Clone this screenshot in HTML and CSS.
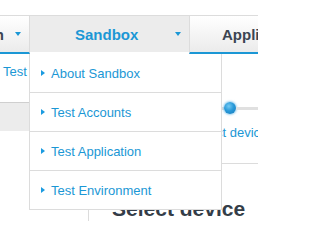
FILE: index.html
```html
<!DOCTYPE html>
<html>
<head>
<meta charset="utf-8">
<link rel="stylesheet" href="styles.css">
</head>
<body>
<div class="page">
  <div class="topbar"></div>
  <nav class="nav">
    <div class="tab tab-left"><span class="tab-label">Documentation</span><span class="caret"></span></div>
    <div class="tab tab-active"><span class="tab-label">Sandbox</span><span class="caret"></span>
      <ul class="menu">
        <li class="menu-item"><span class="bullet"></span>About Sandbox</li>
        <li class="menu-item"><span class="bullet"></span>Test Accounts</li>
        <li class="menu-item"><span class="bullet"></span>Test Application</li>
        <li class="menu-item"><span class="bullet"></span>Test Environment</li>
      </ul>
    </div>
    <div class="tab tab-right"><span class="tab-label">Applications</span><span class="caret"></span></div>
  </nav>
  <div class="main">
    <aside class="side">
      <a class="side-link">Test Accounts</a>
      <div class="side-band"></div>
    </aside>
    <section class="content">
      <div class="stepper">
        <div class="steps">
          <div class="step"><div class="rail"><span class="dot"></span></div><div class="step-label">Select app</div></div>
          <div class="step"><div class="rail"><span class="dot"></span></div><div class="step-label">Select device</div></div>
          <div class="step"><div class="rail"><span class="dot"></span></div><div class="step-label">Run test</div></div>
        </div>
      </div>
      <h2 class="heading">Select device</h2>
    </section>
  </div>
</div>
</body>
</html>
```
FILE: styles.css
```css
html, body {
  margin: 0;
  padding: 0;
  background: #fff;
}
.page {
  width: 258px;
  height: 221px;
  overflow: hidden;
  font-family: "Liberation Sans", Arial, sans-serif;
}
.topbar {
  height: 15px;
}
.nav {
  display: flex;
  border-top: 1px solid #dcdcdc;
  position: relative;
  z-index: 2;
}
.tab {
  display: flex;
  align-items: center;
  box-sizing: border-box;
  height: 38px;
  border-bottom: 2px solid #1b97d5;
  font-weight: bold;
  font-size: 15px;
  white-space: nowrap;
  color: #3b4552;
  flex: none;
}
.caret {
  width: 0;
  height: 0;
  border-top: 4px solid #1b97d5;
  border-left: 3px solid transparent;
  border-right: 3px solid transparent;
  flex: none;
}
.tab-left {
  width: 30px;
  padding-right: 8px;
  border-right: 1px solid #dcdcdc;
  justify-content: flex-end;
  overflow: hidden;
  background: linear-gradient(#ffffff, #ebebeb);
}
.tab-left .caret {
  margin-left: 11px;
}
.tab-active {
  position: relative;
  width: 159px;
  padding-left: 45px;
  padding-right: 8px;
  background: #ececec;
  border-bottom-color: #fff;
  color: #1b97d5;
}
.tab-active .caret {
  margin-left: auto;
}
.tab-right {
  border-left: 1px solid #dcdcdc;
  padding-left: 32px;
  background: linear-gradient(#ffffff, #ebebeb);
}
.tab-right .caret {
  margin-left: 30px;
}
.menu {
  position: absolute;
  top: calc(100% + 2px);
  left: -1px;
  width: 193px;
  box-sizing: border-box;
  margin: 0;
  padding: 0;
  list-style: none;
  background: #fff;
  border-left: 1px solid #dcdcdc;
  border-right: 1px solid #dcdcdc;
  font-weight: normal;
  font-size: 13px;
  color: #1b97d5;
}
.menu-item {
  display: flex;
  align-items: center;
  height: 38px;
  padding-left: 11px;
  border-bottom: 1px solid #dcdcdc;
}
.bullet {
  width: 0;
  height: 0;
  border-left: 4px solid #1b9be0;
  border-top: 3px solid transparent;
  border-bottom: 3px solid transparent;
  margin-right: 6px;
  flex: none;
}
.main {
  display: grid;
  grid-template-columns: 89px 1fr;
}
.side {
  box-sizing: border-box;
  border-right: 1px solid #dcdcdc;
  min-height: 200px;
}
.side-link {
  display: block;
  padding: 10px 0 0 3px;
  line-height: 16px;
  font-size: 13px;
  color: #1b97d5;
  white-space: nowrap;
  overflow: hidden;
}
.side-band {
  margin-top: 22px;
  height: 28px;
  border-top: 1px solid #cfcfcf;
  background: #ececec;
}
.content {
  min-width: 0;
}
.stepper {
  padding: 48px 0 22px 21px;
  border-bottom: 1px solid #dcdcdc;
}
.steps {
  display: grid;
  grid-template-columns: repeat(3, 80px);
}
.rail {
  display: flex;
  align-items: center;
  height: 12px;
}
.rail::before,
.rail::after {
  content: "";
  flex: 1;
  height: 3px;
  background: #e0e0e0;
}
.dot {
  width: 12px;
  height: 12px;
  border-radius: 50%;
  flex: none;
  background: radial-gradient(circle at 40% 35%, #74caf3 0, #2a9ad9 45%, #1278ba 100%);
  box-shadow: 0 0 2px 1px rgba(80, 175, 230, 0.55);
}
.step-label {
  margin-top: 11px;
  padding-right: 5px;
  text-align: center;
  line-height: 16px;
  font-size: 13px;
  color: #1b97d5;
  white-space: nowrap;
}
.heading {
  margin: 32px 0 0 23px;
  font-weight: bold;
  font-size: 21px;
  line-height: 26px;
  color: #343d48;
  white-space: nowrap;
}
```
